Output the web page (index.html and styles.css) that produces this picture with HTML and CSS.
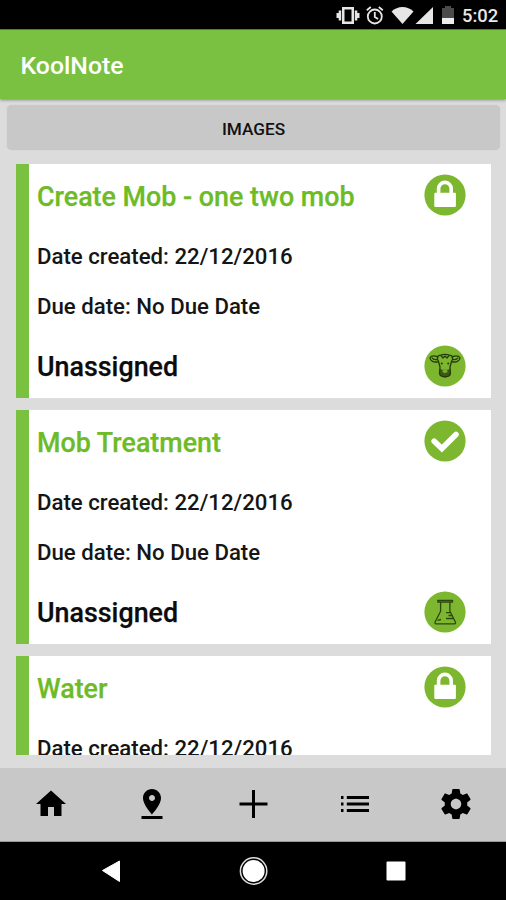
FILE: index.html
```html
<!DOCTYPE html>
<html lang="en">
<head>
<meta charset="utf-8">
<title>KoolNote</title>
<link rel="stylesheet" href="styles.css">
</head>
<body>
<svg class="defs" aria-hidden="true">
  <symbol id="lock" viewBox="0 0 42 42">
    <circle cx="21" cy="21" r="20.6" fill="#7db72f"/>
    <path d="M14.600 20v-5.300a6.300 6.300 0 0 1 12.600 0V20" fill="none" stroke="#fff" stroke-width="3.600"/>
    <rect x="10.300" y="18.700" width="21.600" height="14.300" rx="1" fill="#fff"/>
  </symbol>
  <symbol id="check" viewBox="0 0 42 42">
    <circle cx="21" cy="21" r="20.6" fill="#7db72f"/>
    <path d="M10.200 21.300l7.700 7.300L32 14.500" fill="none" stroke="#fff" stroke-width="5.600" stroke-linecap="round"/>
  </symbol>
  <symbol id="cow" viewBox="0 0 42 42">
    <circle cx="21" cy="21" r="20.6" fill="#7db72f"/>
    <g fill="none" stroke="#253c0b" stroke-width="1.300" stroke-linejoin="round">
      <path d="M14.500 12.500c-2.300-2-7-2.500-8.500.3.5 3.500 3.500 4.700 8 4M27.500 12.500c2.300-2 7-2.500 8.500.3-.5 3.500-3.500 4.700-8 4"/>
      <path d="M8 12.800c1.500 2 3.300 2 5 1.500M34 12.800c-1.500 2-3.300 2-5 1.500"/>
      <path d="M14.500 16.500c-2.200-3-1-6.500 1.500-6 2.500-1.500 7.500-1.500 10 0 2.500-.5 3.700 3 1.500 6l-1.500 5.500.5 6c0 5-11 5-11 0l.5-6z"/>
      <path d="M17 10.500l2 2.500 2-2 2 2 2-2.500"/>
    </g>
    <path d="M16 23.500l2 1.200h6l2-1.200v6c-1 4-9 4-10 0z" fill="#253c0b" opacity=".75"/>
    <ellipse cx="21" cy="26.200" rx="2.600" ry="1.800" fill="#79ad35"/>
    <circle cx="17.800" cy="18.500" r="1" fill="#253c0b"/><circle cx="24.200" cy="18.500" r="1" fill="#253c0b"/>
  </symbol>
  <symbol id="flask" viewBox="0 0 42 42">
    <circle cx="21" cy="21" r="20.6" fill="#7db72f"/>
    <g fill="none" stroke="#2c4710" stroke-width="1.300" stroke-linejoin="round">
      <path d="M13.800 9.300h14.700v1.700H13.800zM16.600 11v9.200l-5.400 10.500q-.8 1.900 1 2.100h18.200q1.700-.3.900-2.100l-5.400-10.500V11"/>
      <path d="M22 21.700h4.500M24.500 24.500h3.800M22 27.500h7.500M13.500 29.300l3.500-.8"/>
    </g>
  </symbol>
</svg>
<div class="screen">
  <div class="status">
    <svg class="status-icons" viewBox="0 0 120 30">
      <g fill="#e6e6e6">
        <path d="M15 7h12v17H15zM17.500 9.500v12h7v-12z" fill-rule="evenodd"/>
        <path d="M11.700 10.500h2.500v10h-2.500zM27.800 10.500h2.500v10h-2.500zM9.500 13h2.200v5H9.500zM30.300 13h2.200v5h-2.200z"/>
        <path d="M64.500 11.500C70.500 5.500 80.500 5.500 86.500 11.500L75.500 24z"/>
        <path d="M106 7v17H88.500z"/>
      </g>
      <g fill="none" stroke="#e6e6e6" stroke-width="1.800">
        <circle cx="47.800" cy="16.500" r="7"/><path d="M47.800 12v5l3.300 2M39.800 10.200l4-3.200M55.800 10.200l-4-3.200"/>
      </g>
    </svg>
    <svg class="battery" viewBox="0 0 12 18"><path d="M0 2h3V0h6v2h3v10H0z" fill="#4b4b4b"/><path d="M0 12h12v6H0z" fill="#eee"/></svg>
    <span class="clock">5:02</span>
  </div>
  <header class="appbar"><h1>KoolNote</h1></header>
  <main class="content">
    <button class="images">IMAGES</button>
    <div class="list">
      <article class="card">
        <h2>Create Mob - one two mob</h2><svg class="badge"><use href="#lock"/></svg>
        <p class="created">Date created: 22/12/2016</p>
        <p class="due">Due date: No Due Date</p>
        <p class="who">Unassigned</p><svg class="badge type"><use href="#cow"/></svg>
      </article>
      <article class="card">
        <h2>Mob Treatment</h2><svg class="badge"><use href="#check"/></svg>
        <p class="created">Date created: 22/12/2016</p>
        <p class="due">Due date: No Due Date</p>
        <p class="who">Unassigned</p><svg class="badge type"><use href="#flask"/></svg>
      </article>
      <article class="card">
        <h2>Water</h2><svg class="badge"><use href="#lock"/></svg>
        <p class="created">Date created: 22/12/2016</p>
      </article>
    </div>
  </main>
  <nav class="tabs">
    <svg viewBox="0 0 24 24"><path d="M10 20v-6h4v6h5v-8h3L12 3 2 12h3v8z"/></svg>
    <svg viewBox="0 0 24 24"><path d="M18 8c0-3.310-2.690-6-6-6S6 4.690 6 8c0 4.500 6 11 6 11s6-6.500 6-11zm-8 0c0-1.100.9-2 2-2s2 .9 2 2-.89 2-2 2-2-.9-2-2zM5 20v2h14v-2z"/></svg>
    <svg viewBox="0 0 36 36"><path d="M16 4h3v12.500H31.500v3H19V32h-3V19.500H3.500v-3H16z"/></svg>
    <svg viewBox="0 0 36 36"><path d="M4 10h2.500v3H4zM4 16.500h2.500v3H4zM4 23h2.500v3H4zM9.800 10H32v3H9.800zM9.800 16.500H32v3H9.800zM9.800 23H32v3H9.800z"/></svg>
    <svg viewBox="0 0 24 24"><path d="M19.430 12.980c.04-.32.070-.64.070-.98s-.03-.66-.07-.98l2.110-1.650c.19-.15.240-.42.120-.64l-2-3.460c-.12-.22-.39-.3-.61-.22l-2.490 1c-.52-.4-1.080-.73-1.690-.98l-.38-2.650C14.460 2.180 14.250 2 14 2h-4c-.25 0-.46.180-.49.420l-.38 2.650c-.61.250-1.170.590-1.690.98l-2.490-1c-.23-.09-.49 0-.61.220l-2 3.460c-.13.220-.07.490.12.640l2.110 1.650c-.04.320-.07.650-.07.980s.03.660.07.980l-2.110 1.650c-.19.150-.24.420-.12.640l2 3.460c.12.220.39.300.61.220l2.490-1c.52.400 1.080.730 1.690.980l.38 2.650c.03.240.24.420.49.420h4c.25 0 .46-.18.490-.42l.38-2.650c.61-.25 1.170-.59 1.690-.98l2.490 1c.23.090.49 0 .61-.22l2-3.460c.12-.22.070-.49-.12-.64zM12 15.500c-1.930 0-3.500-1.570-3.500-3.500s1.570-3.500 3.500-3.500 3.500 1.570 3.500 3.500-1.570 3.500-3.500 3.500z"/></svg>
  </nav>
  <div class="sysnav">
    <svg viewBox="0 0 30 30"><path d="M6.500 14.500L23.500 5v20.500z" fill="#fff" stroke="#fff" stroke-linejoin="round"/></svg>
    <svg viewBox="0 0 30 30"><circle cx="14.600" cy="15" r="13.200" fill="none" stroke="#ddd" stroke-width="1.500"/><circle cx="14.600" cy="15" r="11" fill="#fff"/></svg>
    <svg viewBox="0 0 30 30"><rect x="5.500" y="5.500" width="19" height="19" rx="1" fill="#fff"/></svg>
  </div>
</div>
</body>
</html>
```
FILE: styles.css
```css
* { box-sizing: border-box; }
body { margin: 0; font-family: Roboto, "Liberation Sans", sans-serif; font-weight: 500; }
h1, h2, p { margin: 0; font-weight: 500; white-space: nowrap; }
.defs { display: none; }
.screen { width: 506px; height: 900px; display: flex; flex-direction: column; overflow: hidden; background: #dcdcdc; }
.status { height: 30px; flex: none; background: #000; display: flex; align-items: center; justify-content: flex-end; padding-right: 9px; border-bottom: 1px solid #568b2d; }
.status-icons { width: 120px; height: 30px; margin-right: -5px; }
.battery { width: 12px; height: 18px; margin-right: 8px; }
.clock { color: #e8e8e8; font-size: 18.400px; line-height: 30px; width: 35px; padding-top: 2px; }
.appbar { height: 69px; flex: none; background: #7ac142; padding-left: 20.500px; box-shadow: 0 1px 3px rgba(0, 0, 0, .4); z-index: 1; }
.appbar h1 { color: #fff; font-size: 24.800px; line-height: 71px; }
.content { height: 669px; flex: none; padding: 6px 6px 0 7px; }
.images { display: block; width: 493px; height: 45px; border: 0; border-radius: 5px; background: #c8c8c8; color: #111; font: 500 17.200px/49px Roboto, sans-serif; padding: 0; box-shadow: 0 0 1px #bbb; }
.list { height: 591px; margin: 14px 9px 0; overflow: hidden; display: flex; flex-direction: column; gap: 12px; }
.card { height: 234px; flex: none; background: #fff; border-left: 13px solid #7ac142; display: grid; grid-template-columns: 1fr 42px; grid-template-rows: 67px 50px 50px 67px; align-items: center; padding: 0 25px 0 8px; }
.card h2 { color: #6dbb26; font-size: 26.850px; margin-top: -1px; -webkit-text-stroke: .25px; }
.card .created, .card .due { grid-column: 1 / 3; color: #151515; font-size: 22.200px; }
.card .who { color: #0c0c0c; font-size: 26.850px; padding-top: 5px; -webkit-text-stroke: .25px; }
.badge { width: 42px; height: 42px; display: block; margin-top: -6px; }
.card .type { margin-top: 2px; }
.tabs { height: 74px; flex: none; background: #c8c8c8; display: flex; justify-content: space-between; align-items: center; padding: 0 32px 2px 33px; border-bottom: 1px solid #999; }
.tabs svg { width: 36px; height: 36px; }
.sysnav { height: 58px; flex: none; background: #000; display: flex; justify-content: space-between; align-items: center; padding: 0 95px 0 96px; }
.sysnav svg { width: 30px; height: 30px; }
```
